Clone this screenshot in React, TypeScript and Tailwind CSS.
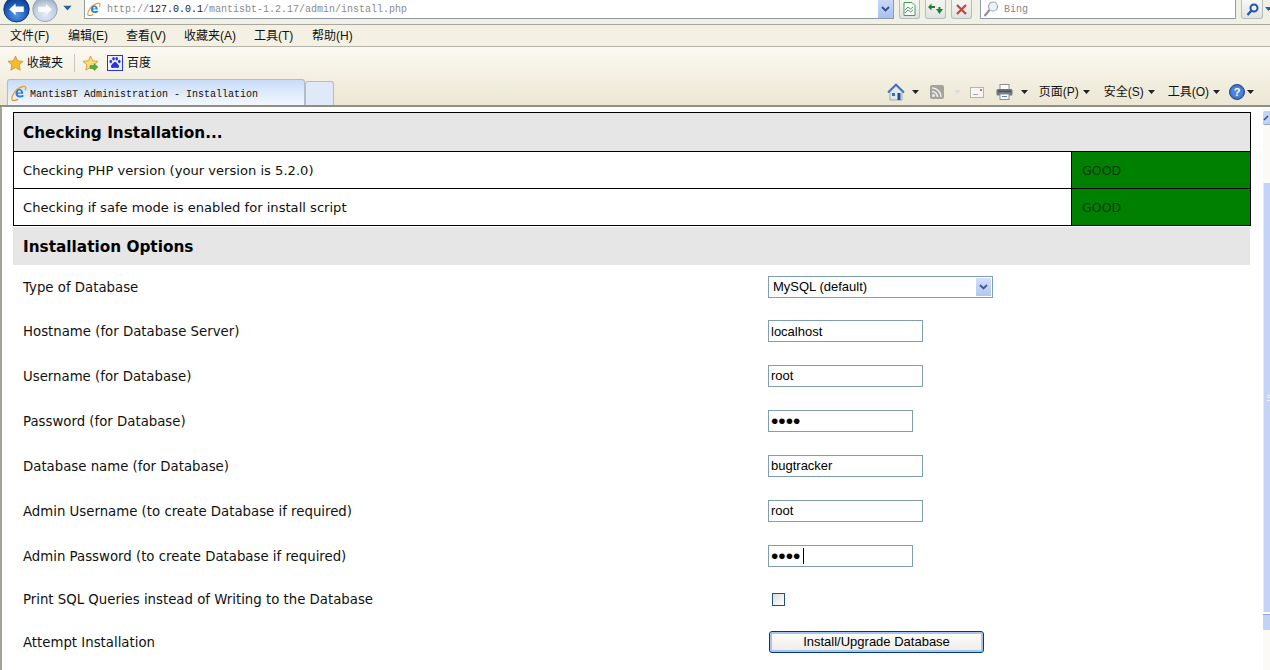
import React from 'react';

const cjk = "font-['Liberation_Sans','Noto_Sans_CJK_SC',sans-serif]";
const mono = "font-['Liberation_Mono','DejaVu_Sans_Mono',monospace]";
const verdana = "font-['DejaVu_Sans',sans-serif]";
const arial = "font-['Liberation_Sans',Arial,sans-serif]";

const NavButton = ({ id, back }: { id: string; back?: boolean }) => (
  <svg width={back ? 32 : 28} height={back ? 24 : 24} viewBox="0 0 32 24">
    <defs>
      <radialGradient id={id} cx="50%" cy="70%" r="70%">
        <stop offset="0%" stopColor={back ? '#5a9ae8' : '#e4ecf6'} />
        <stop offset="60%" stopColor={back ? '#1c5bb8' : '#c3d0e2'} />
        <stop offset="100%" stopColor={back ? '#0f3585' : '#93a5bf'} />
      </radialGradient>
    </defs>
    <circle cx="16" cy="9" r="14" fill={`url(#${id})`} stroke={back ? '#0c2f74' : '#8fa0b8'} />
    <path
      d={back ? 'M8 9l7-6.5V6h9v6h-9v3.5z' : 'M24 9l-7-6.5V6H8v6h9v3.5z'}
      fill="#fff"
      opacity={back ? 1 : 0.85}
    />
  </svg>
);

const IeLogo = ({ size = 16 }: { size?: number }) => (
  <svg width={size} height={size} viewBox="0 0 16 16">
    <path d="M1 15C0 11 5 3 12 1.500c3-.6 3.500 1.500 2 4" fill="none" stroke="#e8a72c" strokeWidth="1.400" />
    <path
      d="M4.500 8.500C4.500 5.500 6.500 4 8.500 4s3.800 1.600 3.800 4.700H6.700c0 1.800 2.700 2.700 4.800 1L13 11c-2.200 2.300-8.500 2.500-8.500-2.500zM6.800 7.400h3.300C10 5 7 5 6.800 7.400z"
      fill="#2f7fd6"
      fillRule="evenodd"
    />
    <path d="M1 15c2 1 4 .5 6-1" fill="none" stroke="#e08c1e" strokeWidth="1.200" />
  </svg>
);

const Star = ({ arrow }: { arrow?: boolean }) => (
  <svg width="17" height="17" viewBox="0 0 17 17">
    <path
      d="M8.500 1l2.200 4.800 5.300.6-3.900 3.600 1.100 5.200-4.700-2.700L3.800 15.200l1.100-5.200L1 6.400l5.300-.6z"
      fill={arrow ? '#f7dc7a' : '#f8bb2e'}
      stroke="#c98a1a"
      strokeWidth="0.700"
    />
    {arrow && <path d="M8 10.500h4V8.500l4 3.500-4 3.500v-2H8z" fill="#4fae3c" stroke="#2f7d25" strokeWidth="0.400" />}
  </svg>
);

const BaiduPaw = () => (
  <svg width="16" height="16" viewBox="0 0 16 16">
    <rect x="0.500" y="0.500" width="15" height="15" fill="#eef0ff" stroke="#2a35d8" />
    <path d="M8 7c2 0 2 2 3.500 3 1.200 1 .4 3.500-1.500 3-1-.3-3-.3-4 0-1.900.5-2.700-2-1.500-3C6 9 6 7 8 7z" fill="#2a35d8" />
    <ellipse cx="3.800" cy="6.500" rx="1.300" ry="1.700" fill="#2a35d8" />
    <ellipse cx="6.500" cy="3.800" rx="1.300" ry="1.700" fill="#2a35d8" />
    <ellipse cx="9.700" cy="3.800" rx="1.300" ry="1.700" fill="#2a35d8" />
    <ellipse cx="12.300" cy="6.500" rx="1.300" ry="1.700" fill="#2a35d8" />
  </svg>
);

const Caret = ({ className = '' }: { className?: string }) => (
  <svg width="7" height="4" viewBox="0 0 7 4" className={className}>
    <path d="M0 0h7L3.500 4z" fill="currentColor" />
  </svg>
);

const HomeIcon = () => (
  <svg width="18" height="18" viewBox="0 0 18 18">
    <path d="M3 8.500V17h12V8.500L9 3z" fill="#dfe6ee" stroke="#7e8fa3" strokeWidth="0.700" />
    <path d="M1 9.500L9 1.500l8 8" fill="none" stroke="#3f6fb5" strokeWidth="1.800" />
    <rect x="5" y="10" width="3" height="3" fill="#3b6fb0" />
    <rect x="10.500" y="10" width="3" height="7" fill="#1f4f94" />
  </svg>
);

const RssIcon = () => (
  <svg width="14" height="14" viewBox="0 0 14 14">
    <rect width="14" height="14" rx="2" fill="#a5a39c" />
    <circle cx="3.500" cy="10.500" r="1.500" fill="#eeeeea" />
    <path d="M2 6.500a5.500 5.500 0 015.500 5.500M2 3a9 9 0 019 9" fill="none" stroke="#eeeeea" strokeWidth="1.500" />
  </svg>
);

const MailIcon = () => (
  <svg width="14" height="11" viewBox="0 0 14 11">
    <rect x="0.500" y="0.500" width="13" height="10" fill="#f6f6f2" stroke="#b5b5ae" />
    <rect x="10" y="2" width="2" height="2" fill="#d96a6a" />
    <path d="M3 7.500h5" stroke="#aaa" />
  </svg>
);

const PrintIcon = () => (
  <svg width="17" height="16" viewBox="0 0 17 16">
    <rect x="4" y="0.500" width="9" height="5" fill="#fff" stroke="#8b8f96" />
    <rect x="0.500" y="5" width="16" height="6.500" rx="1.500" fill="#6f7680" />
    <rect x="2" y="6.500" width="13" height="1.500" fill="#4d535b" />
    <rect x="4" y="10" width="9" height="5.500" fill="#fff" stroke="#8b8f96" />
    <path d="M6 12.500h5" stroke="#5b7fb0" />
  </svg>
);

const HelpIcon = () => (
  <svg width="16" height="16" viewBox="0 0 16 16">
    <circle cx="8" cy="8" r="7.500" fill="#3d6fc4" stroke="#23488f" />
    <circle cx="8" cy="8" r="5.800" fill="#4f83d6" />
    <text x="8" y="12" textAnchor="middle" fontSize="11" fontWeight="700" fill="#fff" fontFamily="Liberation Sans">
      ?
    </text>
  </svg>
);

const ToolButton = ({ children }: { children: React.ReactNode }) => (
  <div className="flex h-[19px] w-[21px] items-center justify-center rounded-b-[3px] border border-t-0 border-[#b7bdb9] bg-gradient-to-b from-[#f6f6f0] to-[#dfe3e0]">
    {children}
  </div>
);

const menuItems = ['文件(F)', '编辑(E)', '查看(V)', '收藏夹(A)', '工具(T)', '帮助(H)'];
const menuGaps = ['w-[58px]', 'w-[58px]', 'w-[58px]', 'w-[70px]', 'w-[58px]', 'w-[50px]'];

const TopChrome = () => (
  <div className={`${cjk} shrink-0 text-[12px] text-[#111]`}>
    {/* address row */}
    <div className="flex h-[25px] items-start border-b border-[#aaa99e] bg-[#f1f0e4]">
      <div className="ml-[2px] flex h-[24px] w-[29px] shrink-0 items-start overflow-hidden">
        <NavButton id="back" back />
      </div>
      <div className="flex h-[24px] w-[29px] shrink-0 items-start overflow-hidden">
        <NavButton id="fwd" />
      </div>
      <Caret className="ml-[4px] mt-[6px] shrink-0 scale-125 text-[#2f5f9e]" />
      <div className="ml-[13px] flex h-[19px] w-[810px] shrink-0 items-center border border-t-0 border-[#8f9aa6] bg-white">
        <div className="ml-[2px] shrink-0">
          <IeLogo size={14} />
        </div>
        <span className={`${mono} ml-[6px] flex-1 truncate text-[10px] text-[#8a8a8a]`}>
          http://<span className="text-[#222]">127.0.0.1</span>/mantisbt-1.2.17/admin/install.php
        </span>
        <div className="flex h-full w-[15px] items-center justify-center bg-gradient-to-b from-[#c9d8f6] to-[#a9c0ee]">
          <svg width="9" height="6" viewBox="0 0 9 6">
            <path d="M1 1l3.500 3.500L8 1" fill="none" stroke="#30518c" strokeWidth="1.800" />
          </svg>
        </div>
      </div>
      <div className="ml-[5px] flex gap-[5px]">
        <ToolButton>
          <svg width="13" height="14" viewBox="0 0 13 14">
            <path d="M1 .5h8l3 3v10H1z" fill="#fff" stroke="#4a9a5a" />
            <path d="M2 8l3-3 2.500 2L10 5M2 11l3-3 2.500 2L10 8" fill="none" stroke="#4a9a5a" />
          </svg>
        </ToolButton>
        <ToolButton>
          <svg width="15" height="12" viewBox="0 0 15 12">
            <path d="M0 4l3.500-3.500V3H7v2H3.500v2.500zM15 6l-3.500 5L8 6h2.500V4h2v2z" fill="#1f7f36" />
          </svg>
        </ToolButton>
        <ToolButton>
          <svg width="11" height="11" viewBox="0 0 11 11">
            <path d="M1 1l9 9M10 1l-9 9" stroke="#c84040" strokeWidth="2.200" />
          </svg>
        </ToolButton>
      </div>
      <div className="ml-[8px] flex h-[19px] w-[256px] shrink-0 items-center border border-t-0 border-[#8f9aa6] bg-white pl-[2px]">
        <svg width="16" height="16" viewBox="0 0 16 16">
          <circle cx="10" cy="5.500" r="4.500" fill="#eef3f8" stroke="#9aa7b2" strokeWidth="1.200" />
          <path d="M6.500 9L1.500 15" stroke="#8f8f86" strokeWidth="2" />
        </svg>
        <span className={`${mono} ml-[5px] text-[10px] text-[#888]`}>Bing</span>
      </div>
      <div className="ml-[5px] flex h-[19px] w-[22px] shrink-0 items-center justify-center rounded-b-[3px] border border-t-0 border-[#b7bdb9] bg-gradient-to-b from-[#f8f8f2] to-[#e1e4e0]">
        <svg width="13" height="13" viewBox="0 0 13 13">
          <circle cx="8" cy="5" r="3.500" fill="none" stroke="#2456ad" strokeWidth="2" />
          <path d="M5.500 7.500L1.500 12" stroke="#2456ad" strokeWidth="2.400" />
        </svg>
      </div>
      <Caret className="ml-[2px] mt-[7px] shrink-0 text-[#2f5f9e]" />
    </div>
    {/* menu row */}
    <div className="flex h-[22px] items-center border-b border-[#b5b3a8] bg-[#f4f1e4] pl-[10px]">
      {menuItems.map((m, i) => (
        <span key={m} className={`${menuGaps[i]} shrink-0 text-[12px] leading-none`}>
          {m}
        </span>
      ))}
    </div>
    {/* favourites and tabs */}
    <div className="flex h-[60px] flex-col border-b-2 border-[#8f8f86] bg-gradient-to-b from-[#fbf9f1] to-[#ece7d4]">
      <div className="flex h-[33px] items-center pl-[7px]">
        <Star />
        <span className="ml-[3px] w-[42px] text-[12px]">收藏夹</span>
        <div className="ml-[5px] h-[18px] w-px bg-[#c9c6b6]" />
        <div className="ml-[7px]">
          <Star arrow />
        </div>
        <div className="ml-[8px]">
          <BaiduPaw />
        </div>
        <span className="ml-[4px] text-[12px]">百度</span>
      </div>
      <div className="flex flex-1 items-end pl-[7px]">
        <div className="flex h-[26px] w-[298px] shrink-0 items-center rounded-t-[3px] border border-b-0 border-[#b4bcc6] bg-gradient-to-b from-[#c8dcf8] to-[#f4f8fd] pl-[3px]">
          <IeLogo size={16} />
          <span className={`${mono} ml-[3px] pt-[3px] text-[10px] text-[#111]`}>
            MantisBT Administration - Installation
          </span>
        </div>
        <div className="h-[24px] w-[29px] shrink-0 rounded-t-[3px] border border-b-0 border-[#b4bcc6] bg-[#dfe9f7]" />
        <div className="mb-[4px] ml-auto flex items-center pr-[16px]">
          <HomeIcon />
          <Caret className="ml-[7px] mr-[11px] text-[#222]" />
          <RssIcon />
          <Caret className="ml-[10px] mr-[9px] text-[#ddd]" />
          <MailIcon />
          <div className="ml-[12px]">
            <PrintIcon />
          </div>
          <Caret className="ml-[8px] mr-[11px] text-[#222]" />
          <span className="text-[12px]">页面(P)</span>
          <Caret className="ml-[4px] mr-[14px] text-[#222]" />
          <span className="text-[12px]">安全(S)</span>
          <Caret className="ml-[4px] mr-[13px] text-[#222]" />
          <span className="text-[12px]">工具(O)</span>
          <Caret className="ml-[4px] mr-[9px] text-[#222]" />
          <HelpIcon />
          <Caret className="ml-[2px] text-[#222]" />
        </div>
      </div>
    </div>
  </div>
);

const Scrollbar = () => (
  <div className="flex w-[7px] shrink-0 flex-col bg-[#fbfaf6] pt-[4px]">
    <div className="flex h-[14px] items-center justify-center rounded-l-[2px] border-b border-[#93a8d6] bg-[#c3d3f6]">
      <svg width="7" height="7" viewBox="0 0 7 7">
        <path d="M1 6l4-4" stroke="#30518c" strokeWidth="1.600" />
      </svg>
    </div>
    <div className="mt-[58px] flex h-[429px] items-center border-l border-[#e8eaf0] bg-[#c4d4f8]">
      <div className="ml-[3px] flex h-[6px] w-[4px] flex-col justify-between">
        <div className="h-px bg-[#eef3fd]" />
        <div className="h-px bg-[#eef3fd]" />
        <div className="h-px bg-[#eef3fd]" />
      </div>
    </div>
    <div className="mt-[2px] h-[16px] border-t border-[#93a8d6] bg-[#c3d3f6]" />
  </div>
);

const CheckRow = ({ label }: { label: string }) => (
  <div className="flex h-[37px] border-t border-black">
    <div className="flex flex-1 items-center pl-[9px] pt-[2px] text-[13.100px]">{label}</div>
    <div className="flex w-[179px] shrink-0 items-center border-l border-black bg-[#008000] pl-[10px] pt-[2px] text-[12.600px] text-[#0a3a0a]">
      GOOD
    </div>
  </div>
);

const fieldCls = `${arial} h-[22px] border border-[#7f9db9] bg-white pl-[2px] text-[13px] text-black outline-none`;
const passCls = `${arial} h-[22px] border border-[#7f9db9] bg-white pl-[2px] text-[21px] leading-none text-black outline-none`;

const FormRow = ({ label, h, children }: { label: string; h: string; children: React.ReactNode }) => (
  <div className={`flex ${h} items-center`}>
    <div className="w-[755px] shrink-0 pl-[10px] pt-[2px]">{label}</div>
    {children}
  </div>
);

const Content = () => (
  <div className={`${verdana} min-w-0 flex-1 bg-white pl-[11px] pr-[12px] pt-[5px] text-[13.300px] text-[#111]`}>
    <div className="border border-black">
      <div className="flex h-[38px] items-center bg-[#e6e6e6] pl-[9px] pt-[2px] text-[15.300px] font-bold text-black">
        Checking Installation...
      </div>
      <CheckRow label="Checking PHP version (your version is 5.2.0)" />
      <CheckRow label="Checking if safe mode is enabled for install script" />
    </div>
    <div className="mr-[1px] mt-[1px] flex h-[38px] items-center bg-[#e6e6e6] pl-[10px] pt-[2px] text-[15.300px] font-bold text-black">
      Installation Options
    </div>
    <FormRow label="Type of Database" h="h-[44px]">
      <div className={`${fieldCls} flex w-[225px] items-center justify-between pl-[4px] pr-[1px]`}>
        <span>MySQL (default)</span>
        <div className="flex h-[18px] w-[15px] items-center justify-center bg-gradient-to-b from-[#d5e0f8] to-[#b2c6f0]">
          <svg width="9" height="6" viewBox="0 0 9 6">
            <path d="M1 1l3.500 3.500L8 1" fill="none" stroke="#3d5a94" strokeWidth="1.800" />
          </svg>
        </div>
      </div>
    </FormRow>
    <FormRow label="Hostname (for Database Server)" h="h-[44px]">
      <input readOnly value="localhost" className={`${fieldCls} w-[155px]`} />
    </FormRow>
    <FormRow label="Username (for Database)" h="h-[45px]">
      <input readOnly value="root" className={`${fieldCls} w-[155px]`} />
    </FormRow>
    <FormRow label="Password (for Database)" h="h-[45px]">
      <input readOnly type="password" value="root" className={`${passCls} w-[145px]`} />
    </FormRow>
    <FormRow label="Database name (for Database)" h="h-[45px]">
      <input readOnly value="bugtracker" className={`${fieldCls} w-[155px]`} />
    </FormRow>
    <FormRow label="Admin Username (to create Database if required)" h="h-[45px]">
      <input readOnly value="root" className={`${fieldCls} w-[155px]`} />
    </FormRow>
    <FormRow label="Admin Password (to create Database if required)" h="h-[45px]">
      <div className="relative">
        <input readOnly type="password" value="root" className={`${passCls} block w-[145px]`} />
        <div className="absolute left-[35px] top-[3px] h-[16px] w-px bg-black" />
      </div>
    </FormRow>
    <FormRow label="Print SQL Queries instead of Writing to the Database" h="h-[42px]">
      <div className="ml-[4px] h-[13px] w-[13px] border border-[#1c5180] bg-gradient-to-br from-[#dcdcd7] to-white" />
    </FormRow>
    <FormRow label="Attempt Installation" h="h-[44px]">
      <button
        className={`${arial} ml-[1px] h-[22px] w-[215px] rounded-[3px] border border-[#003c74] bg-gradient-to-b from-white to-[#ecebe5] text-[13px] text-black shadow-[inset_0_0_0_2px_#a9c4ee]`}
      >
        Install/Upgrade Database
      </button>
    </FormRow>
  </div>
);

export default function App() {
  return (
    <div className="flex h-[670px] w-[1270px] flex-col overflow-hidden bg-white">
      <TopChrome />
      <div className="flex min-h-0 flex-1 border-l-2 border-[#a3a398]">
        <Content />
        <Scrollbar />
      </div>
    </div>
  );
}
